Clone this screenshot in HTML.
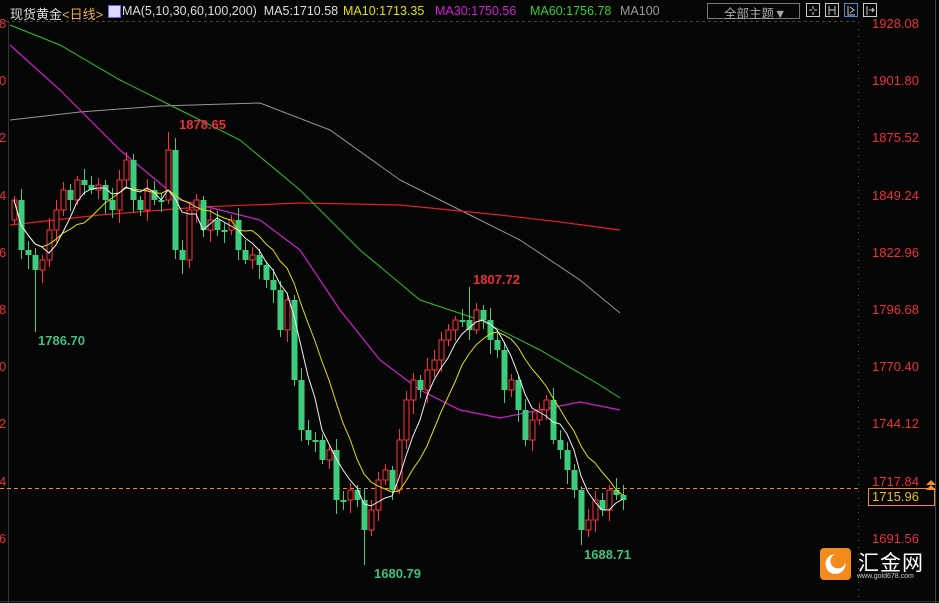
<!DOCTYPE html>
<html><head><meta charset="utf-8">
<style>
html,body{margin:0;padding:0;background:#060606;width:939px;height:603px;overflow:hidden}
body{position:relative;font-family:"Liberation Sans","Noto Sans CJK SC",sans-serif}
.t{position:absolute;font-size:13px;white-space:nowrap}
.b{font-size:12.5px}
</style></head><body>
<svg id="s" width="939" height="603" style="position:absolute;left:0;top:0" xmlns="http://www.w3.org/2000/svg">
<line x1="0" y1="21.5" x2="858" y2="21.5" stroke="#444" stroke-dasharray="3,3"/>
<line x1="8.5" y1="22" x2="8.5" y2="603" stroke="#333"/>
<line x1="858.5" y1="22" x2="858.5" y2="603" stroke="#555" stroke-dasharray="1,6"/>
<line x1="935.5" y1="0" x2="935.5" y2="603" stroke="#444"/>
<line x1="0" y1="601.5" x2="939" y2="601.5" stroke="#333"/>
<polyline fill="none" stroke="#bbb" stroke-width="1" opacity=".8" points="10,120 80,112 160,106 260,103 330,130 400,180 460,210 520,240 580,280 620,313"/>
<polyline fill="none" stroke="#e02020" stroke-width="1.2" points="10,225 100,215 200,207 300,203 400,205 500,215 560,222 620,230"/>
<polyline fill="none" stroke="#30c030" stroke-width="1" points="10,25 60,45 120,80 180,110 240,140 300,190 360,250 420,300 480,320 540,350 600,385 620,398"/>
<polyline fill="none" stroke="#d020d0" stroke-width="1.2" points="10,45 60,90 120,150 180,200 220,210 260,220 300,250 340,310 380,360 420,390 460,410 500,418 540,410 580,402 620,410"/>
<line x1="0" y1="488.5" x2="858" y2="488.5" stroke="#f0902a" stroke-dasharray="4,3"/>
<g id="c"></g>
<rect x="868.5" y="488.5" width="66" height="17" fill="#060606" stroke="#f0902a"/>
<path d="M926 485 l5 -5 l5 5 z M926 490 l5 -5 l5 5z" fill="#f0902a"/>
<rect x="707.5" y="3.5" width="92" height="15" fill="none" stroke="#777"/>
<g fill="none" stroke="#ccc">
<rect x="806.5" y="3.5" width="13" height="13"/><rect x="825.5" y="3.5" width="13" height="13"/>
<rect x="844.5" y="3.5" width="13" height="13" stroke="#3a8fe0"/><rect x="863.5" y="3.5" width="13" height="13"/>
<path d="M813 6v3M813 12v3M809 10h3M814 10h3M829 6v9M835 6v9M829 10h6M848 6v9h7M850 7l4 3-4 3M867 6v9M869 10h5M872 8l2 2-2 2"/>
</g>
<rect x="820" y="548" width="31" height="32" rx="4" fill="#f28a1c"/>
<circle cx="835.5" cy="564" r="10" fill="#fff"/><circle cx="838" cy="561" r="7.5" fill="#f28a1c"/>
</svg>
<div class="t" style="left:10px;top:4px;color:#ddd;font-size:13px">现货黄金<span style="color:#e8b04a">&lt;日线&gt;</span></div>
<div style="position:absolute;left:108px;top:5px;width:11px;height:11px;background:#ddf;border:1px solid #66f"></div>
<div class="t b" style="left:122px;top:4px;color:#ddd">MA(5,10,30,60,100,200)&nbsp; MA5:1710.58</div>
<div class="t b" style="left:343px;top:4px;color:#e0e000">MA10:1713.35</div>
<div class="t b" style="left:435px;top:4px;color:#d020d0">MA30:1750.56</div>
<div class="t b" style="left:530px;top:4px;color:#30d030">MA60:1756.78</div>
<div class="t b" style="left:620px;top:4px;color:#999">MA100</div>
<div class="t b" style="left:724px;top:3px;color:#aaa">全部主题▼</div>
<div id="ax"></div>
<div class="t" style="left:872px;top:489px;color:#e8c020">1715.96</div>
<div class="t" style="left:179px;top:117px;color:#e8303a;font-weight:bold">1878.65</div>
<div class="t" style="left:473px;top:272px;color:#e8303a;font-weight:bold">1807.72</div>
<div class="t" style="left:38px;top:333px;color:#40c080;font-weight:bold">1786.70</div>
<div class="t" style="left:374px;top:566px;color:#40c080;font-weight:bold">1680.79</div>
<div class="t" style="left:584px;top:547px;color:#40c080;font-weight:bold">1688.71</div>
<div class="t" style="left:858px;top:547px;color:#fff;font-size:21px;letter-spacing:1px">汇金网</div>
<div class="t" style="left:857px;top:573px;color:#ccc;font-size:7px">www.gold678.com</div>
<script>
(function(){
var labels=["1928.08","1901.80","1875.52","1849.24","1822.96","1796.68","1770.40","1744.12","1717.84","1691.56"];
var lz=["8","0","2","4","6","8","0","2","4","6"];
var h="";for(var i=0;i<10;i++){var y=24+i*57.2;h+='<div class="t" style="left:872px;top:'+(y-8)+'px;color:#e8303a">'+labels[i]+'</div><div class="t" style="left:-1px;top:'+(y-8)+'px;color:#e8303a">'+lz[i]+'</div>';}
document.getElementById('ax').innerHTML=h;
var C=[200,250,255,270,260,230,210,190,200,180,185,190,185,200,210,180,160,200,210,190,200,200,150,250,260,210,200,230,220,230,230,220,250,260,255,265,280,290,330,300,380,430,440,440,460,450,500,500,490,500,530,510,480,470,490,440,400,380,390,370,360,340,330,320,320,330,310,320,340,350,390,380,410,440,420,410,400,440,450,470,490,530,520,500,510,490,495,500];
var s="";var prev=220;var xs=[];
for(var i=0;i<C.length;i++){var x=14+i*7;xs.push(x);var o=prev,c=C[i];var up=c<o;var tp=Math.min(o,c),bt=Math.max(o,c);if(bt-tp<2)bt=tp+2;
var hi=tp-4-(i*7%9),lo=bt+4+(i*5%11);
if(i==3)lo=332;if(i==22)hi=132;if(i==50)lo=565;if(i==65)hi=287;if(i==81)lo=545;
var col=up?"#ff3040":"#3ccc7c";
s+='<line x1="'+(x+.5)+'" y1="'+hi+'" x2="'+(x+.5)+'" y2="'+lo+'" stroke="'+col+'"/>';
if(up)s+='<rect x="'+(x-2)+'" y="'+tp+'" width="5" height="'+(bt-tp)+'" fill="#060606" stroke="'+col+'"/>';
else s+='<rect x="'+(x-2.5)+'" y="'+tp+'" width="6" height="'+(bt-tp)+'" fill="'+col+'"/>';
prev=c;}
function ma(n,col){var p=[];for(var i=0;i<C.length;i++){var a=0,k=0;for(var j=Math.max(0,i-n+1);j<=i;j++){a+=C[j];k++;}p.push(xs[i]+','+(a/k).toFixed(1));}
return '<polyline fill="none" stroke="'+col+'" points="'+p.join(' ')+'"/>';}
s+=ma(10,"#e0e000")+ma(5,"#f0f0f0");
document.getElementById('c').innerHTML=s;
})();
</script>
</body></html>
